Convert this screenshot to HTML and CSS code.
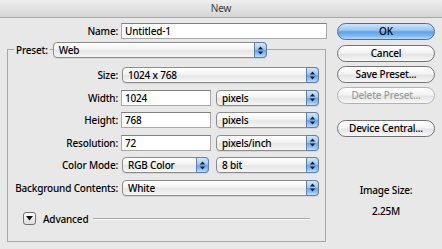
FILE: index.html
```html
<!DOCTYPE html>
<html>
<head>
<meta charset="utf-8">
<link rel="stylesheet" href="styles.css">
</head>
<body>
<div class="titlebar">New</div>
<div class="content">
  <div class="main">
    <div class="row name-row">
      <span class="lbl name-lbl">Name:</span>
      <div class="input name-input">Untitled-1</div>
    </div>
    <div class="group">
      <div class="preset-row">
        <span class="legend">Preset:</span>
        <div class="popup preset"><span class="ptext">Web</span><span class="cap"><svg width="7" height="11" viewBox="0 0 7 11"><path d="M0.8 4.6 L3.5 1.4 L6.2 4.6 Z M0.8 6.4 L3.5 9.6 L6.2 6.4 Z" fill="#10203a"/></svg></span></div>
      </div>
      <div class="rows">
        <div class="row">
          <span class="lbl">Size:</span>
          <div class="popup full"><span class="ptext">1024 x 768</span><span class="cap"><svg width="7" height="11" viewBox="0 0 7 11"><path d="M0.8 4.6 L3.5 1.4 L6.2 4.6 Z M0.8 6.4 L3.5 9.6 L6.2 6.4 Z" fill="#10203a"/></svg></span></div>
        </div>
        <div class="row">
          <span class="lbl">Width:</span>
          <div class="input num">1024</div>
          <div class="popup unit"><span class="ptext">pixels</span><span class="cap"><svg width="7" height="11" viewBox="0 0 7 11"><path d="M0.8 4.6 L3.5 1.4 L6.2 4.6 Z M0.8 6.4 L3.5 9.6 L6.2 6.4 Z" fill="#10203a"/></svg></span></div>
        </div>
        <div class="row">
          <span class="lbl">Height:</span>
          <div class="input num">768</div>
          <div class="popup unit"><span class="ptext">pixels</span><span class="cap"><svg width="7" height="11" viewBox="0 0 7 11"><path d="M0.8 4.6 L3.5 1.4 L6.2 4.6 Z M0.8 6.4 L3.5 9.6 L6.2 6.4 Z" fill="#10203a"/></svg></span></div>
        </div>
        <div class="row">
          <span class="lbl">Resolution:</span>
          <div class="input num">72</div>
          <div class="popup unit"><span class="ptext">pixels/inch</span><span class="cap"><svg width="7" height="11" viewBox="0 0 7 11"><path d="M0.8 4.6 L3.5 1.4 L6.2 4.6 Z M0.8 6.4 L3.5 9.6 L6.2 6.4 Z" fill="#10203a"/></svg></span></div>
        </div>
        <div class="row">
          <span class="lbl">Color Mode:</span>
          <div class="popup mode"><span class="ptext">RGB Color</span><span class="cap"><svg width="7" height="11" viewBox="0 0 7 11"><path d="M0.8 4.6 L3.5 1.4 L6.2 4.6 Z M0.8 6.4 L3.5 9.6 L6.2 6.4 Z" fill="#10203a"/></svg></span></div>
          <div class="popup bits"><span class="ptext">8 bit</span><span class="cap"><svg width="7" height="11" viewBox="0 0 7 11"><path d="M0.8 4.6 L3.5 1.4 L6.2 4.6 Z M0.8 6.4 L3.5 9.6 L6.2 6.4 Z" fill="#10203a"/></svg></span></div>
        </div>
        <div class="row">
          <span class="lbl">Background Contents:</span>
          <div class="popup full"><span class="ptext">White</span><span class="cap"><svg width="7" height="11" viewBox="0 0 7 11"><path d="M0.8 4.6 L3.5 1.4 L6.2 4.6 Z M0.8 6.4 L3.5 9.6 L6.2 6.4 Z" fill="#10203a"/></svg></span></div>
        </div>
      </div>
      <div class="advanced">
        <span class="disclosure"><svg width="7" height="5" viewBox="0 0 7 5"><path d="M0 0 L7 0 L3.5 4.5 Z" fill="#111"/></svg></span>
        <span class="adv-text">Advanced</span>
        <span class="sep"></span>
      </div>
    </div>
  </div>
  <div class="side">
    <div class="btn default">OK</div>
    <div class="btn gap5">Cancel</div>
    <div class="btn gap4">Save Preset...</div>
    <div class="btn gap4 disabled">Delete Preset...</div>
    <div class="btn gap16">Device Central...</div>
    <div class="info-label">Image Size:</div>
    <div class="info-value">2.25M</div>
  </div>
</div>
</body>
</html>
```

FILE: styles.css
```css
* { box-sizing: border-box; margin: 0; padding: 0; }
html, body { width: 442px; height: 249px; overflow: hidden; }
body {
  background: #e8e8e8;
  font-family: "Noto Sans", "DejaVu Sans", sans-serif;
  font-size: 10px;
  font-weight: 500;
  letter-spacing: -0.18px;
  line-height: 16px;
  color: #000;
}
.titlebar {
  height: 18px;
  border-bottom: 1px solid #a8a8a8;
  background: linear-gradient(#eeeeee, #d6d6d6);
  text-align: center;
  color: #3a3a3a;
  font-weight: 400;
  line-height: 16px;
}
.content { display: flex; padding: 5px 0 0 7px; }
.main { width: 320px; flex: none; }
.row { display: flex; align-items: center; height: 16px; }
.lbl { width: 110px; text-align: right; white-space: nowrap; flex: none; }
.name-lbl { width: 111px; }
.input {
  height: 16px;
  margin-left: 3px;
  background: #fff;
  border: 1px solid #a9a9a9;
  border-top-color: #808080;
  padding-left: 3px;
  line-height: 14px;
  flex: none;
}
.name-input { width: 206px; }
.num { width: 90px; }
.popup {
  position: relative;
  display: flex;
  height: 16px;
  border: 1px solid #8c8c8c;
  border-radius: 4px;
  background: linear-gradient(#ffffff 0%, #f3f3f3 45%, #e6e6e6 55%, #f6f6f6 100%);
  box-shadow: 0 1px 0 rgba(0,0,0,0.08);
  flex: none;
}
.ptext { flex: 1; padding-left: 5px; line-height: 14px; white-space: nowrap; }
.cap {
  width: 13px;
  margin: -1px -1px -1px 0;
  border: 1px solid #5f7fae;
  border-radius: 0 4px 4px 0;
  background: linear-gradient(#d4e7fa 0%, #9cc8f1 45%, #6aa7e8 52%, #8cc0f3 80%, #c2e0fb 100%);
  display: flex;
  align-items: center;
  justify-content: center;
}
.preset { width: 214px; margin-left: 3px; }
.full { width: 197px; margin-left: 4px; }
.unit { width: 103px; margin-left: 5px; }
.mode { width: 87px; margin-left: 4px; }
.bits { width: 103px; margin-left: 7px; }
.group {
  width: 319px;
  margin-top: 10px;
  border: 1px solid #a6a6a6;
  padding-bottom: 15px;
}
.preset-row { display: flex; align-items: center; height: 16px; margin-top: -8px; padding-left: 6px; }
.legend { background: #e8e8e8; padding: 0 2px; }
.rows { display: flex; flex-direction: column; gap: 6.6px; margin-top: 9px; }
.advanced { display: flex; align-items: center; height: 14px; margin-top: 16px; padding-left: 15px; }
.disclosure {
  width: 13px; height: 13px;
  border: 1px solid #6f6f6f;
  border-radius: 3px;
  background: linear-gradient(#ffffff, #dcdcdc);
  display: flex; align-items: center; justify-content: center;
  flex: none;
}
.adv-text { margin-left: 7px; }
.sep {
  flex: none;
  width: 217px;
  height: 2px;
  margin-left: 5px;
  border-top: 1px solid #ababab;
  border-bottom: 1px solid #f6f6f6;
}
.side { width: 98px; margin-left: 10px; flex: none; display: flex; flex-direction: column; }
.btn {
  height: 17px;
  border: 1px solid #727272;
  border-radius: 9px;
  background: linear-gradient(#ffffff 0%, #f4f4f4 45%, #e4e4e4 55%, #f7f7f7 100%);
  text-align: center;
  line-height: 15px;
  white-space: nowrap;
}
.default {
  border-color: #4c6d9e;
  background: linear-gradient(#cfe4fa 0%, #98c6f2 42%, #5fa1e8 52%, #7bb7f2 78%, #b6daf9 100%);
}
.gap5 { margin-top: 5px; }
.gap4 { margin-top: 4px; }
.gap16 { margin-top: 16px; }
.disabled { color: #9c9c9c; border-color: #b3b3b3; }
.info-label { margin-top: 45px; text-align: center; }
.info-value { margin-top: 5px; text-align: center; }
```
